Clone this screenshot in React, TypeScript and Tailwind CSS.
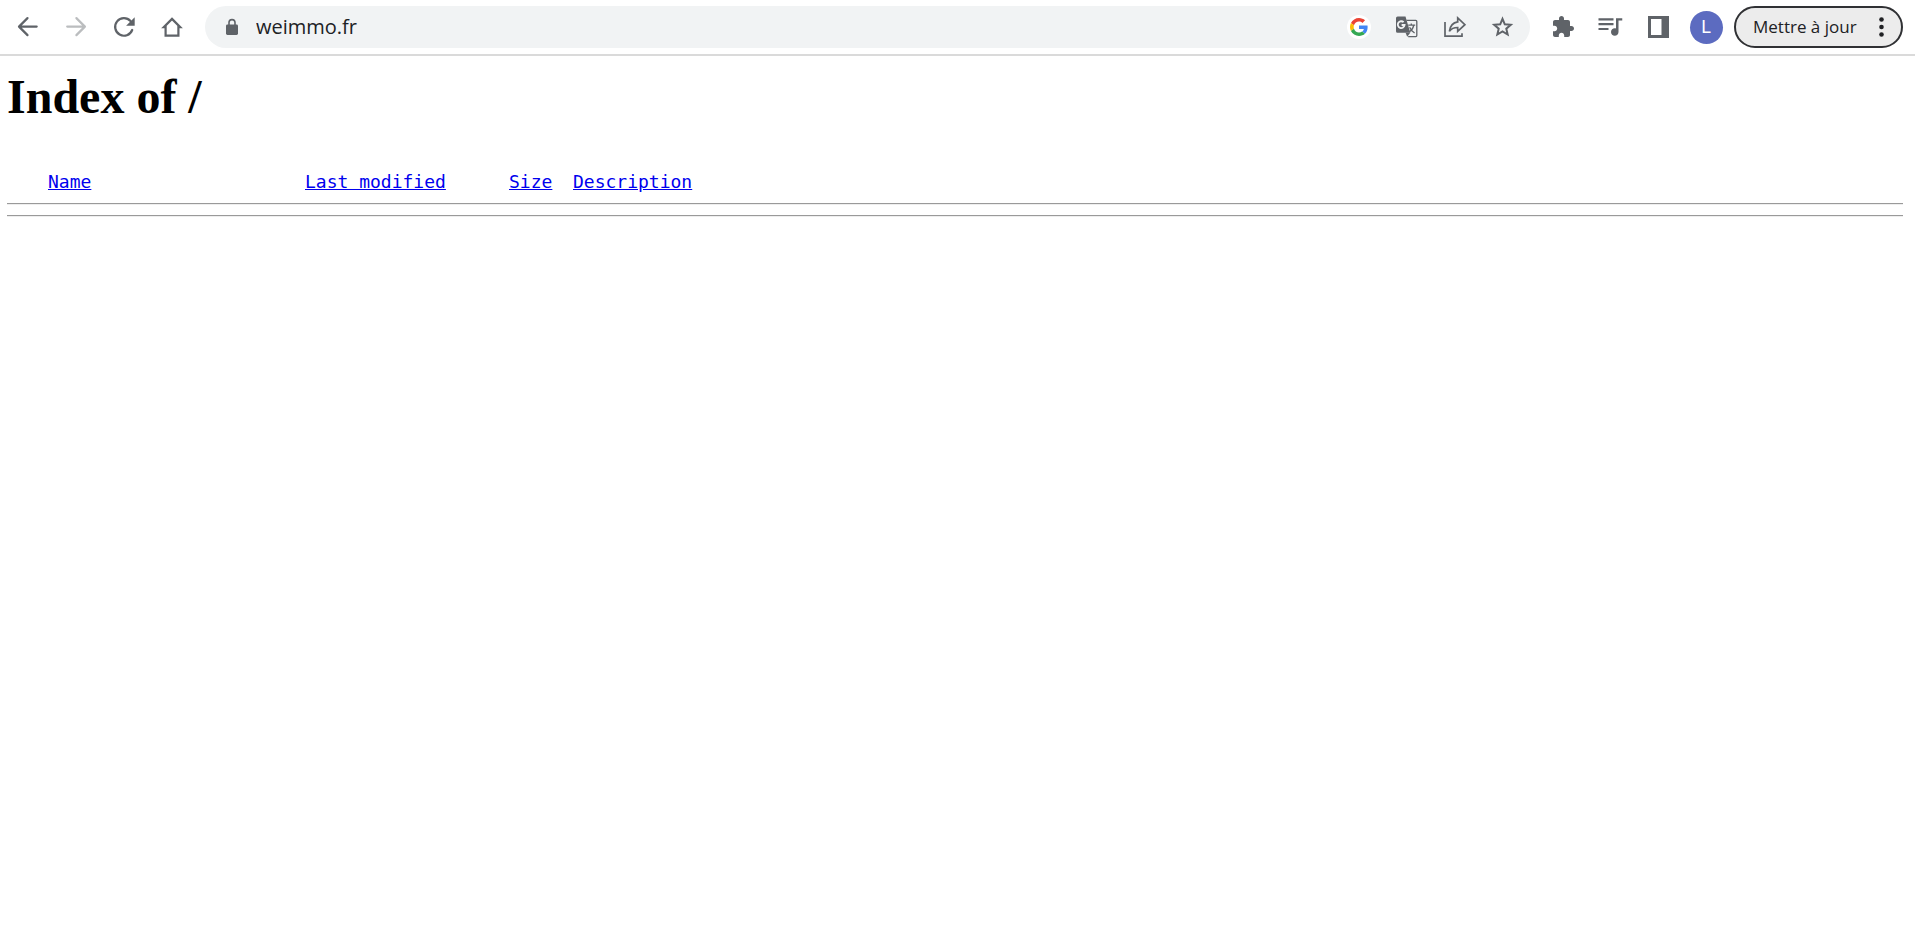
import React from 'react';

interface IconButtonProps {
  label: string;
  disabled?: boolean;
  children: React.ReactNode;
}

const IconButton: React.FC<IconButtonProps> = ({ label, disabled, children }) => (
  <button
    type="button"
    aria-label={label}
    disabled={disabled}
    className="flex h-10 w-12 shrink-0 items-center justify-center text-[#5f6368] disabled:text-[#bbbdbf]"
  >
    {children}
  </button>
);

const BackIcon = () => (
  <svg width="24" height="24" viewBox="0 0 24 24" fill="none" stroke="currentColor" strokeWidth="2.2" strokeLinecap="round" strokeLinejoin="round">
    <path d="M20.7 11.6H3.3M11.5 3.1L3 11.6l8.5 8.5" />
  </svg>
);

const ForwardIcon = () => (
  <svg width="24" height="24" viewBox="0 0 24 24" fill="none" stroke="currentColor" strokeWidth="2.2" strokeLinecap="round" strokeLinejoin="round">
    <path d="M3.2 11.6h17.4M12.4 3.1l8.5 8.5-8.5 8.5" />
  </svg>
);

const ReloadIcon = () => (
  <svg width="24" height="24" viewBox="0 0 24 24">
    <path d="M20.2 15A8.8 8.8 0 1 1 18.5 6" fill="none" stroke="currentColor" strokeWidth="2.2" strokeLinecap="round" />
    <path d="M22.7 2.2v8.6h-8.6z" fill="currentColor" />
  </svg>
);

const HomeIcon = () => (
  <svg width="24" height="24" viewBox="0 0 24 24" fill="none" stroke="currentColor" strokeWidth="2.2">
    <path d="M12 3.9l8.2 8.2h-1.8v8.5H5.6v-8.5H3.8z" />
  </svg>
);

const LockIcon = () => (
  <svg width="14" height="18" viewBox="0 0 14 18" className="shrink-0 text-[#5f6368]">
    <path d="M4 8V4.6a3 3 0 0 1 6 0V8" fill="none" stroke="currentColor" strokeWidth="1.6" />
    <rect x="1" y="6.6" width="12" height="10.4" rx="1.4" fill="currentColor" />
  </svg>
);

const GoogleIcon = () => (
  <svg width="24" height="24" viewBox="0 0 24 24">
    <circle cx="12" cy="12" r="12" fill="#fff" />
    <g transform="translate(3 3) scale(0.375)">
      <path fill="#EA4335" d="M24 9.5c3.54 0 6.71 1.22 9.21 3.6l6.85-6.85C35.9 2.38 30.47 0 24 0 14.62 0 6.51 5.38 2.56 13.22l7.98 6.19C12.43 13.72 17.74 9.5 24 9.5z" />
      <path fill="#4285F4" d="M46.98 24.55c0-1.57-.15-3.09-.38-4.55H24v9.02h12.94c-.58 2.96-2.26 5.48-4.78 7.18l7.73 6c4.51-4.18 7.09-10.36 7.09-17.65z" />
      <path fill="#FBBC05" d="M10.53 28.59c-.48-1.45-.76-2.99-.76-4.59s.27-3.14.76-4.59l-7.98-6.19C.92 16.46 0 20.12 0 24c0 3.88.92 7.54 2.56 10.78l7.97-6.19z" />
      <path fill="#34A853" d="M24 48c6.48 0 11.93-2.13 15.89-5.81l-7.73-6c-2.15 1.45-4.92 2.3-8.16 2.3-6.26 0-11.57-4.22-13.47-9.91l-7.98 6.19C6.51 42.62 14.62 48 24 48z" />
    </g>
  </svg>
);

const TranslateIcon = () => (
  <svg width="24" height="24" viewBox="0 0 24 24" fill="none" stroke="currentColor">
    <path d="M11.5 5.4h9.3a1 1 0 0 1 1 1v14.2a1 1 0 0 1-1 1h-7.6" strokeWidth="1.3" />
    <path d="M2.6 1.5h7.9l4.8 16.3H2.6A1.6 1.6 0 0 1 1 16.2V3.1A1.6 1.6 0 0 1 2.6 1.5z" fill="currentColor" stroke="none" />
    <path d="M10.6 17.8h4.7l-3.1 4z" fill="currentColor" stroke="none" />
    <path d="M8.6 7.2A3.4 3.4 0 1 0 9.6 10H6.6" stroke="#f1f3f4" strokeWidth="1.8" />
    <path d="M13.2 10.2h7M16.3 8.6v1.6M18.8 10.2c-.4 2.6-2 5-4.3 6.6M14.6 12.2c1 2.4 2.7 4.3 5 5.8" strokeWidth="1.3" />
  </svg>
);

const ShareIcon = () => (
  <svg width="24" height="24" viewBox="0 0 24 24" fill="none" stroke="currentColor" strokeWidth="1.7">
    <path d="M2 7v14.2h17v-3" />
    <path d="M14.7 2.9l7.2 6.8-7.2 6.7v-3.9c-3.8 0-6.4 1.1-8.3 3.8.7-5.2 3.5-8.7 8.3-9.4z" />
  </svg>
);

const StarIcon = () => (
  <svg width="24" height="24" viewBox="0 0 24 24" fill="none" stroke="currentColor" strokeWidth="2">
    <path d="M11.5 3.8l2.3 5.5 6 .5-4.5 3.9 1.35 5.8-5.15-3.1-5.15 3.1 1.35-5.8-4.5-3.9 6-.5z" />
  </svg>
);

const ExtensionIcon = () => (
  <svg width="24" height="24" viewBox="-1 0 24 24" fill="currentColor">
    <path d="M20.5 11H19V7c0-1.1-.9-2-2-2h-4V3.5C13 2.12 11.88 1 10.5 1S8 2.12 8 3.5V5H4c-1.1 0-1.99.9-1.99 2v3.8H3.5c1.49 0 2.7 1.21 2.7 2.7s-1.21 2.7-2.7 2.7H2V20c0 1.1.9 2 2 2h3.8v-1.5c0-1.49 1.21-2.7 2.7-2.7 1.49 0 2.7 1.21 2.7 2.7V22H17c1.1 0 2-.9 2-2v-4h1.5c1.38 0 2.5-1.12 2.5-2.5S21.88 11 20.5 11z" />
  </svg>
);

const QueueIcon = () => (
  <svg width="30" height="30" viewBox="0 0 24 24" fill="currentColor">
    <path d="M14.8 5h-12v1.7h12V5zm0 3.8h-12v1.7h12V8.8zM2.8 14.4h8v-1.7h-8v1.7zM16.8 5v8.18c-.31-.11-.65-.18-1-.18-1.66 0-3 1.34-3 3s1.34 3 3 3 3-1.34 3-3V6.7h3V5h-5z" />
  </svg>
);

const SidePanelIcon = () => (
  <svg width="24" height="24" viewBox="-1 0 24 24">
    <path fill="currentColor" fillRule="evenodd" d="M1 1h21v22H1zM4 4v16h10.5V4z" />
  </svg>
);

const Toolbar = () => (
  <header className="flex h-14 items-center border-b-2 border-[#dadada] pl-1 pr-3 font-['Open_Sans','Noto_Sans',sans-serif]">
    <IconButton label="Retour"><BackIcon /></IconButton>
    <IconButton label="Avancer" disabled><ForwardIcon /></IconButton>
    <IconButton label="Actualiser"><ReloadIcon /></IconButton>
    <IconButton label="Accueil"><HomeIcon /></IconButton>

    {/* Address bar */}
    <div className="ml-[9px] flex h-[42px] min-w-0 flex-1 items-center rounded-full bg-[#f1f3f4] pl-5 pr-[3px]">
      <LockIcon />
      <input
        type="text"
        aria-label="Adresse"
        defaultValue="weimmo.fr"
        className="ml-[17px] min-w-0 flex-1 bg-transparent text-[20px] leading-6 text-[#202124] outline-none"
      />
      <IconButton label="Rechercher avec Google"><GoogleIcon /></IconButton>
      <IconButton label="Traduire"><TranslateIcon /></IconButton>
      <IconButton label="Partager"><ShareIcon /></IconButton>
      <IconButton label="Ajouter aux favoris"><StarIcon /></IconButton>
    </div>

    <div className="ml-2 flex items-center">
      <IconButton label="Extensions"><ExtensionIcon /></IconButton>
      <IconButton label="Lecture multimédia"><QueueIcon /></IconButton>
      <IconButton label="Panneau latéral"><SidePanelIcon /></IconButton>
      <IconButton label="Profil">
        <span className="flex size-[33px] items-center justify-center rounded-full bg-[#5c6bc0] font-[Roboto,sans-serif] text-[18px] leading-none text-white">
          L
        </span>
      </IconButton>
    </div>

    <button
      type="button"
      className="ml-1 flex h-[42px] w-[169px] shrink-0 items-center justify-between rounded-full border-2 border-[#303134] bg-[#ececec] px-[17px] text-[17px] text-[#202124]"
    >
      Mettre à jour
      <svg width="5" height="20" viewBox="0 0 5 20" fill="currentColor">
        <circle cx="2.5" cy="2.5" r="2.3" />
        <circle cx="2.5" cy="10" r="2.3" />
        <circle cx="2.5" cy="17.5" r="2.3" />
      </svg>
    </button>
  </header>
);

const columns = [
  { name: 'Name', href: '?C=N;O=D', width: 'w-[257px]' },
  { name: 'Last modified', href: '?C=M;O=A', width: 'w-[204px]' },
  { name: 'Size', href: '?C=S;O=A', width: 'w-16' },
  { name: 'Description', href: '?C=D;O=A', width: '' },
];

const Rule = () => <hr className="h-0.5 border-t border-b border-t-[#9a9a9a] border-b-[#eeeeee]" />;

export default function App() {
  return (
    <div className="min-h-screen bg-white text-black">
      <Toolbar />
      <main className="pl-[7px] pr-3 pt-[13px]">
        <h1 className="font-['Liberation_Serif',serif] text-[48px] font-bold leading-14">Index of /</h1>

        <table className="mt-[45px] mb-[9px] ml-[41px] table-fixed font-['DejaVu_Sans_Mono',monospace] text-[18px] leading-6">
          <thead>
            <tr>
              {columns.map((col) => (
                <th key={col.name} scope="col" className={`${col.width} p-0 text-left font-normal whitespace-nowrap`}>
                  <a href={col.href} className="text-[#0000ee] underline">{col.name}</a>
                </th>
              ))}
            </tr>
          </thead>
        </table>

        <div className="flex flex-col gap-2.5">
          <Rule />
          <Rule />
        </div>
      </main>
    </div>
  );
}
